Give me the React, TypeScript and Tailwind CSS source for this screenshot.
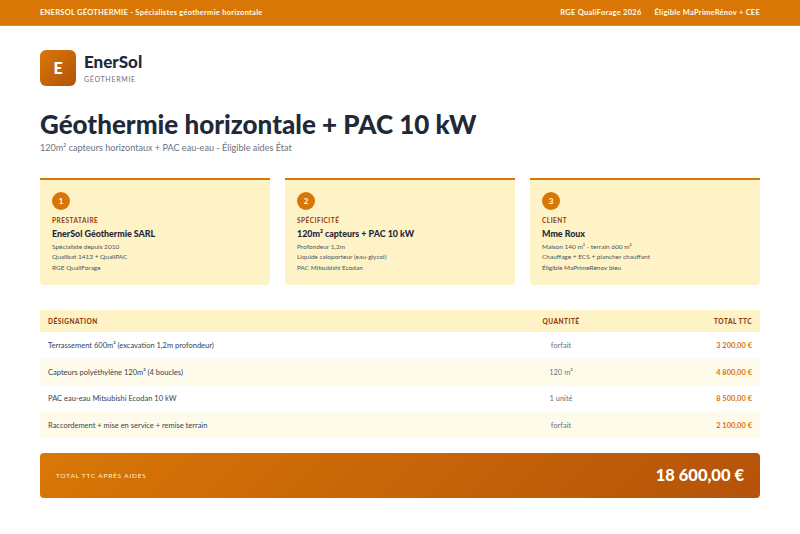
import React from 'react';

const cards = [
  {
    n: 1,
    label: 'PRESTATAIRE',
    title: 'EnerSol Géothermie SARL',
    lines: ['Spécialiste depuis 2010', 'Qualibat 1413 + QualiPAC', 'RGE QualiForage'],
  },
  {
    n: 2,
    label: 'SPÉCIFICITÉ',
    title: '120m² capteurs + PAC 10 kW',
    lines: ['Profondeur 1,2m', 'Liquide caloporteur (eau-glycol)', 'PAC Mitsubishi Ecodan'],
  },
  {
    n: 3,
    label: 'CLIENT',
    title: 'Mme Roux',
    lines: ['Maison 140 m² - terrain 600 m²', 'Chauffage + ECS + plancher chauffant', 'Éligible MaPrimeRénov bleu'],
  },
];

const rows = [
  { name: 'Terrassement 600m² (excavation 1,2m profondeur)', qty: 'forfait', total: '3 200,00 €' },
  { name: 'Capteurs polyéthylène 120m² (4 boucles)', qty: '120 m²', total: '4 800,00 €' },
  { name: 'PAC eau-eau Mitsubishi Ecodan 10 kW', qty: '1 unité', total: '8 500,00 €' },
  { name: 'Raccordement + mise en service + remise terrain', qty: 'forfait', total: '2 100,00 €' },
];

export default function App() {
  return (
    <div className="h-[534px] w-[800px] overflow-hidden bg-white font-['Lato',sans-serif] text-[#1f2937]">
      {/* Top bar */}
      <div className="flex h-[26px] items-center justify-between border-b border-[#fbbf24]/40 bg-[#d97706] px-10 text-[7.5px] font-bold tracking-[0.26px] text-[#fffbeb]">
        <span>ENERSOL GÉOTHERMIE - Spécialistes géothermie horizontale</span>
        <div className="flex gap-[13px]">
          <span>RGE QualiForage 2026</span>
          <span>Éligible MaPrimeRénov + CEE</span>
        </div>
      </div>

      <div className="px-10 pt-6">
        {/* Logo */}
        <div className="flex items-center gap-2">
          <div className="flex h-9 w-9 items-center justify-center rounded-md bg-linear-135 from-[#d97706] to-[#b45309] text-base font-black text-white">
            E
          </div>
          <div>
            <div className="text-[17px] leading-[20px] font-black text-[#1f2937]">EnerSol</div>
            <div className="mt-[1px] text-[7px] leading-[12px] tracking-[0.7px] text-[#6b7280]">GÉOTHERMIE</div>
          </div>
        </div>

        {/* Heading */}
        <h1 className="mt-[22px] text-[26px] leading-[33px] font-black text-[#1f2937]">
          Géothermie horizontale + PAC 10 kW
        </h1>
        <p className="text-[9.1px] leading-[14px] text-[#6b7280]">
          120m² capteurs horizontaux + PAC eau-eau - Éligible aides État
        </p>

        {/* Cards */}
        <div className="mt-[23px] grid grid-cols-3 gap-[15px]">
          {cards.map((c) => (
            <div key={c.n} className="h-[107px] rounded-b border-t-[2px] border-[#d97706] bg-[#fef3c7] px-3 pt-3">
              <div className="flex h-[18px] w-[18px] items-center justify-center rounded-full bg-[#d97706] text-[8px] font-bold text-white">
                {c.n}
              </div>
              <div className="mt-[6px] text-[6.5px] leading-[10px] font-bold tracking-[0.5px] text-[#92400e]">{c.label}</div>
              <div className="mt-[1px] text-[8.9px] leading-[14px] font-black text-[#1f2937]">{c.title}</div>
              <div className="mt-[1px] text-[6.5px] leading-[10.3px] text-[#4b5563]">
                {c.lines.map((l) => (
                  <div key={l}>{l}</div>
                ))}
              </div>
            </div>
          ))}
        </div>

        {/* Table */}
        <div className="mt-[25px]">
          <div className="grid h-[22px] grid-cols-[1fr_120px_131px] items-center bg-[#fef3c7] px-2 pt-px text-[6.5px] font-black tracking-[0.5px] text-[#92400e]">
            <span>DÉSIGNATION</span>
            <span className="text-center">QUANTITÉ</span>
            <span className="text-right">TOTAL TTC</span>
          </div>
          {rows.map((r, i) => (
            <div
              key={r.name}
              className={`grid h-[26.5px] grid-cols-[1fr_120px_131px] items-center px-2 pt-px text-[7.5px] ${
                i % 2 === 1 ? 'bg-[#fffbeb]' : 'bg-white'
              }`}
            >
              <span className="text-[#374151]">{r.name}</span>
              <span className="text-center text-[#6b7280]">{r.qty}</span>
              <span className="text-right font-bold text-[#d97706]">{r.total}</span>
            </div>
          ))}
        </div>

        {/* Total */}
        <div className="mt-[15px] flex h-[45px] items-center justify-between rounded bg-linear-135 from-[#d97706] to-[#b45309] px-4 text-white">
          <span className="text-[6.5px] tracking-[0.8px] text-[#fef3c7]">TOTAL TTC APRÈS AIDES</span>
          <span className="text-[16.5px] font-black">18 600,00 €</span>
        </div>
      </div>
    </div>
  );
}
